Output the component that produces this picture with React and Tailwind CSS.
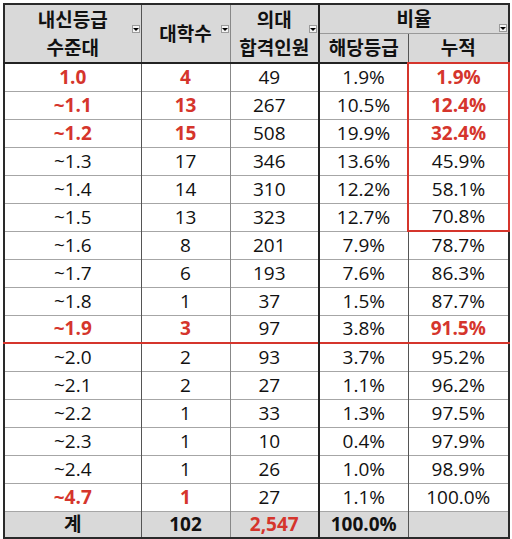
const ROWS = [
  { g: "1.0", n: "4", p: "49", r: "1.9%", c: "1.9%", red: true, redC: true },
  { g: "~1.1", n: "13", p: "267", r: "10.5%", c: "12.4%", red: true, redC: true },
  { g: "~1.2", n: "15", p: "508", r: "19.9%", c: "32.4%", red: true, redC: true },
  { g: "~1.3", n: "17", p: "346", r: "13.6%", c: "45.9%" },
  { g: "~1.4", n: "14", p: "310", r: "12.2%", c: "58.1%" },
  { g: "~1.5", n: "13", p: "323", r: "12.7%", c: "70.8%" },
  { g: "~1.6", n: "8", p: "201", r: "7.9%", c: "78.7%" },
  { g: "~1.7", n: "6", p: "193", r: "7.6%", c: "86.3%" },
  { g: "~1.8", n: "1", p: "37", r: "1.5%", c: "87.7%" },
  { g: "~1.9", n: "3", p: "97", r: "3.8%", c: "91.5%", red: true, redC: true, line: true },
  { g: "~2.0", n: "2", p: "93", r: "3.7%", c: "95.2%" },
  { g: "~2.1", n: "2", p: "27", r: "1.1%", c: "96.2%" },
  { g: "~2.2", n: "1", p: "33", r: "1.3%", c: "97.5%" },
  { g: "~2.3", n: "1", p: "10", r: "0.4%", c: "97.9%" },
  { g: "~2.4", n: "1", p: "26", r: "1.0%", c: "98.9%" },
  { g: "~4.7", n: "1", p: "27", r: "1.1%", c: "100.0%", red: true },
];

const RED = "text-[#d5352c] font-bold";

function Filter({ pos }) {
  return (
    <span
      className={`absolute flex h-[8px] w-[8px] items-center justify-center border border-[#9a9a9a] bg-[#f4f4f4] ${pos}`}
    >
      <span className="h-0 w-0 border-x-[3px] border-t-[3px] border-x-transparent border-t-black" />
    </span>
  );
}

export default function App() {
  return (
    <div
      className="min-h-screen bg-white pl-[3px] pt-[3px] text-[#111]"
      style={{ fontFamily: '"Open Sans", "Noto Sans CJK KR", sans-serif' }}
    >
      <table className="w-[505px] table-fixed border-collapse border-2 border-[#2a2a2a]">
        <colgroup>
          <col className="w-[137px]" />
          <col className="w-[89px]" />
          <col className="w-[89px]" />
          <col className="w-[89px]" />
          <col className="w-[101px]" />
        </colgroup>
        <thead className="bg-[#d9d9d9] text-[19px] leading-[28px]">
          <tr className="h-[28px]">
            <th rowSpan={2} className="relative border-r border-[#555] p-0 font-bold">
              내신등급
              <br />
              수준대
              <Filter pos="right-[1px] top-[20px]" />
            </th>
            <th rowSpan={2} className="relative border-r border-[#888] p-0 font-bold">
              대학수
              <Filter pos="right-[1px] top-[20px]" />
            </th>
            <th rowSpan={2} className="relative border-r-2 border-[#222] p-0 font-bold">
              의대
              <br />
              합격인원
              <Filter pos="right-[1px] top-[20px]" />
            </th>
            <th colSpan={2} className="relative border-b border-[#999] p-0 font-bold">
              비율
              <Filter pos="right-[1px] bottom-[1px]" />
            </th>
          </tr>
          <tr className="h-[28px]">
            <th className="border-r border-[#555] p-0 font-bold">해당등급</th>
            <th className="p-0 font-bold">누적</th>
          </tr>
        </thead>
        <tbody className="border-t-2 border-[#222] text-[19px] leading-none">
          {ROWS.map((r, i) => {
            const rowLine = r.line ? "border-b-2 border-b-[#d5352c]" : "border-b border-b-[#a6a6a6]";
            const boxed = i < 6;
            return (
              <tr key={r.g} className={`h-[28px] ${rowLine}`}>
                <td className={`border-r border-r-[#555] p-0 text-center ${r.red ? RED : ""}`}>{r.g}</td>
                <td className={`border-r border-r-[#888] p-0 text-center ${r.red ? RED : ""}`}>{r.n}</td>
                <td className="border-r-2 border-r-[#222] p-0 pr-[10px] text-center">{r.p}</td>
                <td className="border-r border-r-[#555] p-0 text-center">{r.r}</td>
                <td
                  className={`p-0 text-center ${r.redC ? RED : ""} ${
                    boxed
                      ? `border-x-2 border-x-[#d5352c] ${i === 0 ? "border-t-2 border-t-[#d5352c]" : ""} ${
                          i === 5 ? "border-b-2 border-b-[#d5352c]" : ""
                        }`
                      : ""
                  }`}
                >
                  {r.c}
                </td>
              </tr>
            );
          })}
          <tr className="h-[27px] bg-[#d9d9d9] font-bold">
            <td className="border-r border-r-[#555] p-0 text-center">계</td>
            <td className="border-r border-r-[#888] p-0 text-center">102</td>
            <td className="border-r-2 border-r-[#222] p-0 text-center text-[#d5352c]">2,547</td>
            <td className="border-r border-r-[#555] p-0 text-center">100.0%</td>
            <td className="p-0" />
          </tr>
        </tbody>
      </table>
    </div>
  );
}
